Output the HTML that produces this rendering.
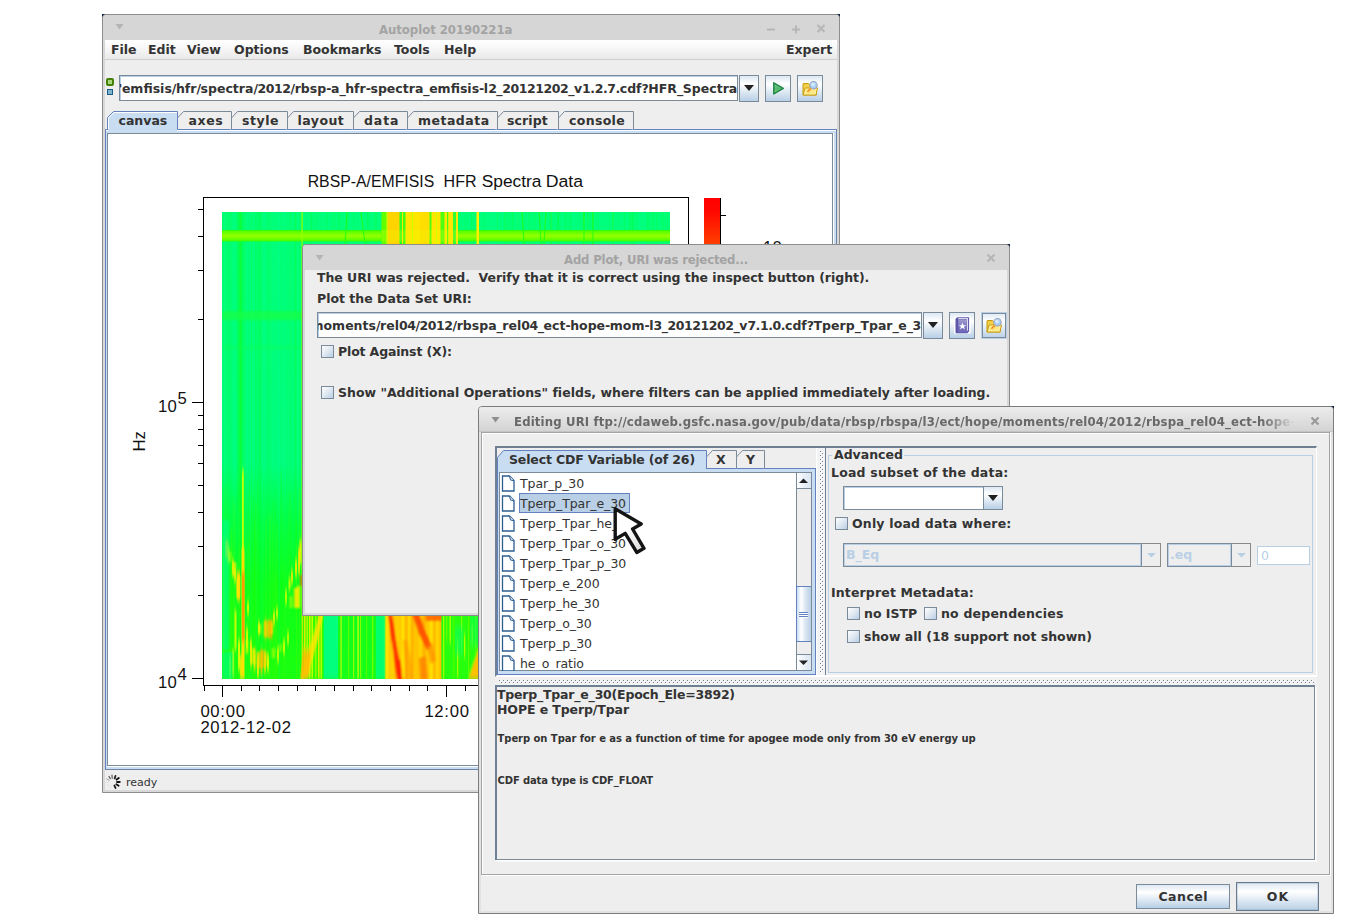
<!DOCTYPE html>
<html><head><meta charset="utf-8"><title>Autoplot</title>
<style>
html,body{margin:0;padding:0;background:#fff;}
body{width:1345px;height:916px;position:relative;overflow:hidden;font:bold 12.5px "DejaVu Sans","Liberation Sans",sans-serif;color:#333;}
.a{position:absolute;box-sizing:border-box;}
.t{position:absolute;white-space:pre;line-height:16px;height:16px;}
.win{position:absolute;box-sizing:border-box;background:#eee;border:1px solid #8e8e8e;border-radius:5px 5px 0 0;overflow:hidden;}
.tb{position:absolute;left:0;right:0;top:0;background:#d6d6d6;}
.tbt{position:absolute;font:bold 13px "DejaVu Sans Condensed","Liberation Sans",sans-serif;color:#a3a3a3;white-space:pre;}
.btn{position:absolute;box-sizing:border-box;border:1px solid #7a8a99;background:linear-gradient(#dde8f3 0%,#fff 32%,#b8cfe5 100%);}
.tf{position:absolute;box-sizing:border-box;border:1px solid #7a8a99;background:#fff;overflow:hidden;}
.tf:before{content:"";position:absolute;left:0;top:0;right:0;bottom:0;border:1px solid #b8cfe5;border-right:0;border-bottom:0;}
.cb{position:absolute;box-sizing:border-box;width:13px;height:13px;border:1px solid #7a8a99;background:linear-gradient(135deg,#fff 0%,#dfe8f1 50%,#b8cfe5 100%);}
.tab{position:absolute;box-sizing:border-box;height:19px;line-height:17px;text-align:center;}
.nf{font-weight:normal;}
</style></head><body>
<!-- ================= WINDOW 1 : Autoplot main ================= -->
<div class="a" style="left:102px;top:14px;width:4px;height:4px;background:#0b1d3a;"></div><div class="a" style="left:836px;top:14px;width:4px;height:4px;background:#0b1d3a;"></div>
<div class="a" style="left:102px;top:14px;width:738px;height:779px;background:#eee;border:1px solid #8d8d8d;border-radius:4px 4px 0 0;box-shadow:inset 0 0 0 2px #d8d8d8;"></div>
<div class="a" style="left:103px;top:15px;width:736px;height:25px;background:#d6d6d6;border-radius:3px 3px 0 0;"></div>
<!-- titlebar glyphs -->
<svg class="a" style="left:115px;top:23px" width="10" height="8"><path d="M0.5 1 L8.5 1 L4.5 6.5 Z" fill="#b4b4b4"/></svg>
<div class="tbt" style="left:379px;top:21px;line-height:17px;letter-spacing:-0.040px;">Autoplot 20190221a</div>
<svg class="a" style="left:764px;top:20px" width="70" height="16"><g stroke="#b6b6b6" stroke-width="2" fill="none"><path d="M3 9.5 H11"/><path d="M28 9.5 H36 M32 5.5 V13.5"/><path d="M53.500 5 L60.500 12 M60.500 5 L53.500 12" stroke-width="2.200"/></g></svg>
<!-- menubar -->
<div class="a" style="left:105px;top:40px;width:732px;height:20px;background:linear-gradient(#fff 0%,#fafafa 30%,#e9e9e9 100%);border-bottom:1px solid #cfcfcf;"></div>
<div class="t" style="left:111px;top:42px;">File</div>
<div class="t" style="left:148px;top:42px;">Edit</div>
<div class="t" style="left:187px;top:42px;">View</div>
<div class="t" style="left:234px;top:42px;">Options</div>
<div class="t" style="left:303px;top:42px;">Bookmarks</div>
<div class="t" style="left:394px;top:42px;">Tools</div>
<div class="t" style="left:444px;top:42px;">Help</div>
<div class="t" style="left:786px;top:42px;">Expert</div>
<!-- status squares -->
<div class="a" style="left:106px;top:78px;width:8px;height:8px;background:#a6d87a;border:2px solid #447f06;border-radius:2px;"></div>
<div class="a" style="left:107px;top:89px;width:6px;height:6px;background:#7fb5d3;border:1px solid #1d5c80;"></div>
<!-- url field -->
<div class="tf" style="left:119px;top:75px;width:619px;height:26px;"><div class="t" style="left:-1.500px;top:5px;"><span style="letter-spacing:-0.450px">'</span>emfisis<span style="letter-spacing:-0.450px">/</span>hfr<span style="letter-spacing:-0.450px">/</span>spectra<span style="letter-spacing:-0.450px">/2012/</span>rbsp<span style="letter-spacing:-0.450px">-</span>a<span style="letter-spacing:-0.450px">_</span>hfr<span style="letter-spacing:-0.450px">-</span>spectra<span style="letter-spacing:-0.450px">_</span>emfisis<span style="letter-spacing:-0.450px">-</span>l<span style="letter-spacing:-0.450px">2_20121202_</span>v<span style="letter-spacing:-0.450px">1.2.7.</span>cdf<span style="letter-spacing:-0.450px">?</span>HFR<span style="letter-spacing:-0.450px">_</span>Spectra</div></div>
<div class="btn" style="left:739px;top:75px;width:20px;height:27px;"><svg class="a" style="left:4px;top:9px" width="11" height="7"><path d="M0 0 H10 L5 6 Z" fill="#222"/></svg></div>
<div class="btn" style="left:765px;top:75px;width:26px;height:27px;"><svg class="a" style="left:6px;top:5px" width="14" height="15"><defs><linearGradient id="pg" x1="0" y1="0" x2="0" y2="1"><stop offset="0" stop-color="#7ccf96"/><stop offset="0.550" stop-color="#4fb56c"/><stop offset="1" stop-color="#8fd66a"/></linearGradient></defs><path d="M1.800 1.800 L11.300 7.400 L1.800 12.900 Z" fill="url(#pg)" stroke="#23884a" stroke-width="1.500" stroke-linejoin="round"/></svg></div>
<div class="btn" style="left:797px;top:75px;width:26px;height:27px;"><svg class="a" style="left:4px;top:4px" width="18" height="18"><path d="M1 4 Q1 3.500 1.500 3.500 H6.500 L8 5 H14.500 V15 H1 Z" fill="#f3cf4a" stroke="#c49a0c"/><path d="M3 8 H15.500 L14 15 H1.200 Z" fill="#fff0a0" stroke="#c9a010"/><path d="M4 9.500 H13.500 L12.800 13.500 H3 Z" fill="#ffe678" opacity=".7"/><circle cx="11.500" cy="5.200" r="3.700" fill="#a9d1f7" stroke="#9da5b8" stroke-width="1.100"/><circle cx="11" cy="4.500" r="1.800" fill="#d6eafc"/><path d="M8.800 8.300 L5.600 11.800" stroke="#e8742a" stroke-width="2"/><path d="M8.800 8.300 L5.600 11.800" stroke="#ffd23c" stroke-width="2" stroke-dasharray="0.800 1"/></svg></div>
<!-- tabs -->
<div class="a" style="left:105px;top:129px;width:732px;height:641px;background:#c8ddf2;border:1px solid #6382bf;border-right-color:#6d83a6;border-bottom-color:#6d83a6;box-shadow:inset 0 1px 0 #fff;"></div>
<div class="a" style="left:107px;top:133px;width:727px;height:634px;background:#fff;"></div>
<div class="a" style="left:107px;top:133px;width:726px;height:633px;background:#fff;border:1px solid #7a8a99;"></div>
<svg class="a" style="left:105px;top:110px" width="540" height="22">
 <g font-family="DejaVu Sans, Liberation Sans, sans-serif" font-weight="bold" font-size="12.500" fill="#333">
  <path d="M2.500 21 V7.500 L8.500 1.500 H72.500 V19.500" fill="#c8ddf2" stroke="#6382bf"/>
  <path d="M3.500 20 V8 L9 2.500 H72" fill="none" stroke="#fff"/>
  <rect x="3" y="19" width="69" height="3" fill="#c8ddf2"/>
  <rect x="1" y="20" width="2" height="1" fill="#fff"/>
  <g fill="#eee" stroke="#7a8a99">
   <path d="M72.500 8 L78.500 1.500 H126.500 V19.500"/>
   <path d="M126.500 8 L132.500 1.500 H182.500 V19.500"/>
   <path d="M182.500 8 L188.500 1.500 H248.500 V19.500"/>
   <path d="M248.500 8 L254.500 1.500 H302.500 V19.500"/>
   <path d="M302.500 8 L308.500 1.500 H392.500 V19.500"/>
   <path d="M392.500 8 L398.500 1.500 H453.500 V19.500"/>
   <path d="M453.500 8 L459.500 1.500 H528.500 V19.500"/>
  </g>
  <text x="13.500" y="15">canvas</text>
  <text x="83.500" y="15" letter-spacing="0.600">axes</text>
  <text x="137" y="15" letter-spacing="0.550">style</text>
  <text x="192.500" y="15" letter-spacing="0.480">layout</text>
  <text x="259" y="15" letter-spacing="0.900">data</text>
  <text x="313" y="15" letter-spacing="0.480">metadata</text>
  <text x="402" y="15" letter-spacing="0.100">script</text>
  <text x="464" y="15" letter-spacing="0.330">console</text>
 </g>
</svg>
<!-- status bar -->
<svg class="a" style="left:105px;top:774px" width="17" height="16"><g stroke-linecap="round" stroke-width="1.800" fill="none">
<path d="M10.500 1.800 L9.700 4.400" stroke="#222"/><path d="M13.800 4 L11.600 5.600" stroke="#111"/><path d="M14.800 8 L12 8" stroke="#111"/><path d="M13.600 11.800 L11.300 10.300" stroke="#111"/><path d="M10.500 14 L9.400 11.500" stroke="#111"/>
<path d="M7 1.500 L7.300 4" stroke="#888"/><path d="M4 2.500 L5.300 4.600" stroke="#555" stroke-width="1.200"/><path d="M1.800 5 L4 6.200" stroke="#999" stroke-width="1"/><path d="M1.200 8.500 L3.300 8.300" stroke="#ddd" stroke-width="1"/><path d="M2.500 11.500 L4 10.300" stroke="#e0e0e0" stroke-width="1"/><path d="M5 13.500 L5.800 12" stroke="#e0e0e0" stroke-width="1"/></g></svg>
<div class="t nf" style="left:126px;top:775px;font-size:11px;">ready</div>
<!-- ============ plot canvas ============ -->
<svg class="a" style="left:108px;top:134px" width="724" height="631" viewBox="108 134 724 631">
<defs><filter id="b1" x="-20%" y="-20%" width="140%" height="140%"><feGaussianBlur stdDeviation="1.2"/></filter><filter id="b2" x="-20%" y="-20%" width="140%" height="140%"><feGaussianBlur stdDeviation="2.5"/></filter><filter id="bx" x="-5%" y="-5%" width="110%" height="110%"><feGaussianBlur stdDeviation="0.5 3"/></filter><linearGradient id="gv" x1="0" y1="0" x2="0" y2="1"><stop offset="0" stop-color="#00ff7c"/><stop offset="0.54" stop-color="#00fd80"/><stop offset="0.66" stop-color="#04ff48"/><stop offset="0.8" stop-color="#0cff1c"/><stop offset="1" stop-color="#1cff10"/></linearGradient><linearGradient id="band" x1="0" y1="0" x2="0" y2="1"><stop offset="0" stop-color="#2aff10"/><stop offset="0.12" stop-color="#58ff00"/><stop offset="0.5" stop-color="#96ff00"/><stop offset="0.88" stop-color="#58ff00"/><stop offset="1" stop-color="#2aff10"/></linearGradient><linearGradient id="cbar" x1="0" y1="0" x2="0" y2="1"><stop offset="0" stop-color="#ff0000"/><stop offset="0.025" stop-color="#ff0600"/><stop offset="0.1" stop-color="#ff4200"/><stop offset="0.2" stop-color="#ff8000"/><stop offset="0.35" stop-color="#ffd800"/><stop offset="0.5" stop-color="#40ff00"/><stop offset="0.65" stop-color="#00ffc0"/><stop offset="0.8" stop-color="#0060ff"/><stop offset="1" stop-color="#000030"/></linearGradient><clipPath id="sc"><rect x="222" y="212" width="448" height="467"/></clipPath></defs>
<g clip-path="url(#sc)">
<rect x="222" y="212" width="448" height="467" fill="url(#gv)"/>
<rect x="367.1" y="212" width="1" height="467" fill="#00ff20" opacity="0.14"/>
<rect x="254.5" y="212" width="1.5" height="467" fill="#30ff10" opacity="0.08"/>
<rect x="248.0" y="212" width="1.5" height="467" fill="#00ff20" opacity="0.10"/>
<rect x="416.3" y="212" width="0.8" height="467" fill="#30ff10" opacity="0.11"/>
<rect x="412.2" y="212" width="1.5" height="467" fill="#10ff30" opacity="0.08"/>
<rect x="504.5" y="212" width="1.5" height="467" fill="#30ff10" opacity="0.25"/>
<rect x="484.3" y="212" width="0.8" height="467" fill="#00ff20" opacity="0.26"/>
<rect x="471.4" y="212" width="1" height="467" fill="#10ff30" opacity="0.12"/>
<rect x="464.2" y="212" width="1.5" height="467" fill="#10ff30" opacity="0.12"/>
<rect x="268.2" y="212" width="1.5" height="467" fill="#00ff30" opacity="0.19"/>
<rect x="265.6" y="212" width="2" height="467" fill="#00ff20" opacity="0.07"/>
<rect x="499.3" y="212" width="1" height="467" fill="#00ffa0" opacity="0.20"/>
<rect x="570.2" y="212" width="1" height="467" fill="#00ffa0" opacity="0.18"/>
<rect x="384.0" y="212" width="1" height="467" fill="#10ff30" opacity="0.22"/>
<rect x="258.7" y="212" width="1" height="467" fill="#00ff30" opacity="0.17"/>
<rect x="548.8" y="212" width="1" height="467" fill="#00ff20" opacity="0.18"/>
<rect x="274.9" y="212" width="1" height="467" fill="#00ff30" opacity="0.09"/>
<rect x="290.1" y="212" width="1" height="467" fill="#00ff20" opacity="0.14"/>
<rect x="564.5" y="212" width="1.5" height="467" fill="#00ff30" opacity="0.22"/>
<rect x="374.4" y="212" width="1" height="467" fill="#30ff10" opacity="0.18"/>
<rect x="579.0" y="212" width="0.8" height="467" fill="#00ff30" opacity="0.23"/>
<rect x="434.4" y="212" width="2" height="467" fill="#00ff30" opacity="0.07"/>
<rect x="511.9" y="212" width="2" height="467" fill="#00ff30" opacity="0.22"/>
<rect x="543.0" y="212" width="2" height="467" fill="#00ffa0" opacity="0.13"/>
<rect x="381.2" y="212" width="1.5" height="467" fill="#00ff20" opacity="0.08"/>
<rect x="319.8" y="212" width="1" height="467" fill="#10ff30" opacity="0.09"/>
<rect x="400.3" y="212" width="1" height="467" fill="#00ffa0" opacity="0.08"/>
<rect x="401.9" y="212" width="1" height="467" fill="#00ffa0" opacity="0.24"/>
<rect x="609.1" y="212" width="1" height="467" fill="#00ff30" opacity="0.20"/>
<rect x="527.9" y="212" width="1" height="467" fill="#10ff30" opacity="0.25"/>
<rect x="259.2" y="212" width="1" height="467" fill="#10ff30" opacity="0.11"/>
<rect x="227.4" y="212" width="1.5" height="467" fill="#00ff30" opacity="0.10"/>
<rect x="223.8" y="212" width="1" height="467" fill="#30ff10" opacity="0.17"/>
<rect x="475.7" y="212" width="1" height="467" fill="#30ff10" opacity="0.20"/>
<rect x="647.7" y="212" width="2" height="467" fill="#00ff20" opacity="0.20"/>
<rect x="426.6" y="212" width="2" height="467" fill="#00ffa0" opacity="0.22"/>
<rect x="400.3" y="212" width="1" height="467" fill="#00ffa0" opacity="0.08"/>
<rect x="249.9" y="212" width="0.8" height="467" fill="#00ffa0" opacity="0.26"/>
<rect x="294.7" y="212" width="1" height="467" fill="#00ff20" opacity="0.18"/>
<rect x="222.1" y="212" width="1" height="467" fill="#00ff30" opacity="0.17"/>
<rect x="497.0" y="212" width="0.8" height="467" fill="#30ff10" opacity="0.23"/>
<rect x="390.6" y="212" width="2" height="467" fill="#00ff30" opacity="0.11"/>
<rect x="491.8" y="212" width="1" height="467" fill="#00ffa0" opacity="0.08"/>
<rect x="666.9" y="212" width="1" height="467" fill="#00ff30" opacity="0.16"/>
<rect x="260.5" y="212" width="0.8" height="467" fill="#00ff30" opacity="0.21"/>
<rect x="436.4" y="212" width="2" height="467" fill="#00ff20" opacity="0.09"/>
<rect x="313.9" y="212" width="1.5" height="467" fill="#30ff10" opacity="0.13"/>
<rect x="631.5" y="212" width="1.5" height="467" fill="#00ff20" opacity="0.12"/>
<rect x="533.9" y="212" width="1" height="467" fill="#10ff30" opacity="0.16"/>
<rect x="381.4" y="212" width="1" height="467" fill="#30ff10" opacity="0.17"/>
<rect x="369.7" y="212" width="1" height="467" fill="#10ff30" opacity="0.18"/>
<rect x="583.1" y="212" width="1" height="467" fill="#10ff30" opacity="0.21"/>
<rect x="311.6" y="212" width="1" height="467" fill="#00ff20" opacity="0.13"/>
<rect x="665.3" y="212" width="1" height="467" fill="#10ff30" opacity="0.15"/>
<rect x="532.2" y="212" width="1" height="467" fill="#00ff30" opacity="0.15"/>
<rect x="649.8" y="212" width="1" height="467" fill="#00ff20" opacity="0.08"/>
<rect x="323.6" y="212" width="1" height="467" fill="#00ffa0" opacity="0.13"/>
<rect x="501.6" y="212" width="1.5" height="467" fill="#00ffa0" opacity="0.23"/>
<rect x="629.3" y="212" width="1" height="467" fill="#00ff20" opacity="0.22"/>
<rect x="595.9" y="212" width="0.8" height="467" fill="#10ff30" opacity="0.24"/>
<rect x="436.2" y="212" width="1" height="467" fill="#00ff30" opacity="0.15"/>
<rect x="260.9" y="212" width="2" height="467" fill="#00ffa0" opacity="0.14"/>
<rect x="555.0" y="212" width="0.8" height="467" fill="#10ff30" opacity="0.20"/>
<rect x="666.9" y="212" width="0.8" height="467" fill="#00ffa0" opacity="0.09"/>
<rect x="583.3" y="212" width="1" height="467" fill="#30ff10" opacity="0.18"/>
<rect x="661.2" y="212" width="2" height="467" fill="#10ff30" opacity="0.25"/>
<rect x="467.8" y="212" width="1" height="467" fill="#00ff20" opacity="0.06"/>
<rect x="457.9" y="212" width="1" height="467" fill="#10ff30" opacity="0.15"/>
<rect x="592.1" y="212" width="1" height="467" fill="#10ff30" opacity="0.07"/>
<rect x="353.2" y="212" width="1" height="467" fill="#00ff30" opacity="0.21"/>
<rect x="338.2" y="212" width="1" height="467" fill="#00ff20" opacity="0.23"/>
<rect x="629.7" y="212" width="1" height="467" fill="#30ff10" opacity="0.24"/>
<rect x="587.1" y="212" width="1.5" height="467" fill="#30ff10" opacity="0.14"/>
<rect x="280.6" y="212" width="1" height="467" fill="#00ff20" opacity="0.16"/>
<rect x="613.0" y="212" width="1" height="467" fill="#10ff30" opacity="0.18"/>
<rect x="299.2" y="212" width="1" height="467" fill="#00ff20" opacity="0.18"/>
<rect x="471.3" y="212" width="1" height="467" fill="#30ff10" opacity="0.20"/>
<rect x="470.8" y="212" width="0.8" height="467" fill="#00ff20" opacity="0.24"/>
<rect x="333.3" y="212" width="1" height="467" fill="#00ff20" opacity="0.07"/>
<rect x="449.5" y="212" width="1.5" height="467" fill="#00ff20" opacity="0.07"/>
<rect x="420.6" y="212" width="1.5" height="467" fill="#30ff10" opacity="0.25"/>
<rect x="451.4" y="212" width="2" height="467" fill="#30ff10" opacity="0.12"/>
<rect x="460.9" y="212" width="1" height="467" fill="#10ff30" opacity="0.16"/>
<rect x="535.2" y="212" width="1" height="467" fill="#10ff30" opacity="0.24"/>
<rect x="598.3" y="212" width="1" height="467" fill="#00ffa0" opacity="0.14"/>
<rect x="420.1" y="212" width="0.8" height="467" fill="#00ffa0" opacity="0.19"/>
<rect x="254.8" y="212" width="2" height="467" fill="#00ff20" opacity="0.12"/>
<rect x="623.9" y="212" width="1" height="467" fill="#00ff30" opacity="0.25"/>
<rect x="286.1" y="212" width="1" height="467" fill="#10ff30" opacity="0.25"/>
<rect x="556.5" y="212" width="0.8" height="467" fill="#00ffa0" opacity="0.14"/>
<rect x="294.9" y="212" width="2" height="467" fill="#10ff30" opacity="0.23"/>
<rect x="538.4" y="212" width="1.5" height="467" fill="#00ffa0" opacity="0.14"/>
<rect x="309.7" y="212" width="1" height="467" fill="#00ff30" opacity="0.08"/>
<rect x="230.7" y="212" width="1.5" height="467" fill="#00ff20" opacity="0.15"/>
<rect x="394.2" y="212" width="1.5" height="467" fill="#30ff10" opacity="0.18"/>
<rect x="652.4" y="212" width="0.8" height="467" fill="#10ff30" opacity="0.26"/>
<rect x="657.3" y="212" width="0.8" height="467" fill="#00ff30" opacity="0.08"/>
<rect x="239.7" y="212" width="1" height="467" fill="#10ff30" opacity="0.11"/>
<rect x="589.3" y="212" width="2" height="467" fill="#00ff30" opacity="0.22"/>
<rect x="403.9" y="212" width="1.5" height="467" fill="#30ff10" opacity="0.24"/>
<rect x="443.6" y="212" width="1" height="467" fill="#00ff20" opacity="0.08"/>
<rect x="580.2" y="212" width="1" height="467" fill="#00ff20" opacity="0.15"/>
<rect x="342.5" y="212" width="0.8" height="467" fill="#00ff30" opacity="0.19"/>
<rect x="259.5" y="212" width="1" height="467" fill="#00ff20" opacity="0.07"/>
<rect x="425.3" y="212" width="1" height="467" fill="#00ffa0" opacity="0.26"/>
<rect x="637.1" y="212" width="1" height="467" fill="#00ff20" opacity="0.18"/>
<rect x="458.1" y="212" width="1" height="467" fill="#10ff30" opacity="0.25"/>
<rect x="339.3" y="212" width="1" height="467" fill="#00ff30" opacity="0.10"/>
<rect x="503.6" y="212" width="1.5" height="467" fill="#00ff30" opacity="0.21"/>
<rect x="421.7" y="212" width="2" height="467" fill="#00ff30" opacity="0.10"/>
<rect x="582.0" y="212" width="1" height="467" fill="#00ff20" opacity="0.07"/>
<rect x="550.4" y="212" width="1.5" height="467" fill="#30ff10" opacity="0.26"/>
<rect x="434.7" y="212" width="1" height="467" fill="#00ffa0" opacity="0.08"/>
<rect x="516.1" y="212" width="1.5" height="467" fill="#00ffa0" opacity="0.23"/>
<rect x="656.7" y="212" width="1" height="467" fill="#10ff30" opacity="0.20"/>
<rect x="375.5" y="212" width="2" height="467" fill="#10ff30" opacity="0.21"/>
<rect x="403.3" y="212" width="1" height="467" fill="#10ff30" opacity="0.26"/>
<rect x="228.4" y="212" width="2" height="467" fill="#00ff30" opacity="0.21"/>
<rect x="415.0" y="212" width="0.8" height="467" fill="#00ffa0" opacity="0.08"/>
<rect x="612.0" y="212" width="2" height="467" fill="#30ff10" opacity="0.25"/>
<rect x="330.5" y="212" width="1" height="467" fill="#10ff30" opacity="0.07"/>
<rect x="292.6" y="212" width="1" height="467" fill="#00ff30" opacity="0.06"/>
<rect x="652.9" y="212" width="1.5" height="467" fill="#00ff20" opacity="0.12"/>
<rect x="654.6" y="212" width="1" height="467" fill="#10ff30" opacity="0.10"/>
<rect x="222.5" y="212" width="1" height="467" fill="#00ff30" opacity="0.08"/>
<rect x="447.2" y="212" width="1" height="467" fill="#00ff20" opacity="0.11"/>
<rect x="262.7" y="212" width="0.8" height="467" fill="#30ff10" opacity="0.09"/>
<rect x="240.7" y="212" width="0.8" height="467" fill="#10ff30" opacity="0.12"/>
<rect x="259.8" y="212" width="1.5" height="467" fill="#10ff30" opacity="0.23"/>
<rect x="516.6" y="212" width="2" height="467" fill="#30ff10" opacity="0.22"/>
<rect x="396.5" y="212" width="1" height="467" fill="#00ffa0" opacity="0.20"/>
<rect x="289.0" y="212" width="2" height="467" fill="#10ff30" opacity="0.18"/>
<rect x="241.6" y="212" width="2" height="467" fill="#00ffa0" opacity="0.24"/>
<rect x="550.8" y="212" width="1.5" height="467" fill="#30ff10" opacity="0.09"/>
<rect x="559.3" y="212" width="1.5" height="467" fill="#00ff20" opacity="0.23"/>
<rect x="592.2" y="212" width="1.5" height="467" fill="#10ff30" opacity="0.22"/>
<rect x="260.1" y="212" width="0.8" height="467" fill="#00ff30" opacity="0.09"/>
<rect x="651.9" y="212" width="1" height="467" fill="#30ff10" opacity="0.23"/>
<rect x="244.7" y="212" width="0.8" height="467" fill="#10ff30" opacity="0.19"/>
<rect x="441.2" y="212" width="0.8" height="467" fill="#00ff20" opacity="0.15"/>
<rect x="557.2" y="212" width="1.5" height="467" fill="#00ff20" opacity="0.24"/>
<rect x="517.4" y="212" width="0.8" height="467" fill="#00ffa0" opacity="0.21"/>
<rect x="335.0" y="212" width="0.8" height="467" fill="#10ff30" opacity="0.23"/>
<rect x="548.7" y="212" width="1" height="467" fill="#00ffa0" opacity="0.11"/>
<rect x="443.3" y="212" width="1" height="467" fill="#00ff30" opacity="0.08"/>
<rect x="565.6" y="212" width="1.5" height="467" fill="#10ff30" opacity="0.19"/>
<rect x="256.7" y="212" width="1" height="467" fill="#00ff30" opacity="0.13"/>
<rect x="500.3" y="212" width="1" height="467" fill="#00ff20" opacity="0.06"/>
<rect x="439.6" y="212" width="2" height="467" fill="#10ff30" opacity="0.08"/>
<rect x="524.7" y="212" width="1" height="467" fill="#00ff30" opacity="0.20"/>
<rect x="430.2" y="212" width="1" height="467" fill="#30ff10" opacity="0.21"/>
<rect x="311.3" y="212" width="0.8" height="467" fill="#00ff20" opacity="0.25"/>
<rect x="351.7" y="212" width="0.8" height="467" fill="#00ffa0" opacity="0.22"/>
<rect x="667.3" y="212" width="1" height="467" fill="#10ff30" opacity="0.10"/>
<rect x="255.4" y="212" width="0.8" height="467" fill="#30ff10" opacity="0.09"/>
<rect x="339.3" y="212" width="1" height="467" fill="#30ff10" opacity="0.09"/>
<rect x="347.2" y="212" width="0.8" height="467" fill="#10ff30" opacity="0.20"/>
<rect x="445.1" y="212" width="1" height="467" fill="#10ff30" opacity="0.14"/>
<rect x="223.6" y="212" width="1" height="467" fill="#00ffa0" opacity="0.20"/>
<rect x="357.3" y="212" width="1" height="467" fill="#00ffa0" opacity="0.14"/>
<rect x="363.6" y="212" width="1" height="467" fill="#00ff30" opacity="0.06"/>
<rect x="597.9" y="212" width="0.8" height="467" fill="#10ff30" opacity="0.25"/>
<rect x="541.4" y="212" width="2" height="467" fill="#00ff30" opacity="0.12"/>
<rect x="251.1" y="212" width="1" height="467" fill="#30ff10" opacity="0.26"/>
<rect x="256.2" y="212" width="1" height="467" fill="#00ff20" opacity="0.21"/>
<rect x="347.7" y="212" width="0.8" height="467" fill="#00ff30" opacity="0.23"/>
<rect x="506.5" y="212" width="1" height="467" fill="#00ff30" opacity="0.11"/>
<rect x="417.4" y="212" width="1" height="467" fill="#00ff30" opacity="0.10"/>
<rect x="573.7" y="212" width="1" height="467" fill="#00ffa0" opacity="0.24"/>
<rect x="631.2" y="212" width="1.5" height="467" fill="#00ff20" opacity="0.17"/>
<rect x="244.2" y="212" width="2" height="467" fill="#30ff10" opacity="0.14"/>
<rect x="559.2" y="212" width="2" height="467" fill="#00ffa0" opacity="0.23"/>
<rect x="243.9" y="212" width="1.5" height="467" fill="#00ffa0" opacity="0.09"/>
<rect x="407.9" y="212" width="1" height="467" fill="#00ff30" opacity="0.12"/>
<rect x="404.0" y="212" width="1" height="467" fill="#30ff10" opacity="0.12"/>
<rect x="521.7" y="212" width="0.8" height="467" fill="#10ff30" opacity="0.09"/>
<rect x="255.7" y="212" width="1.5" height="467" fill="#00ffa0" opacity="0.24"/>
<rect x="468.6" y="212" width="1" height="467" fill="#00ffa0" opacity="0.24"/>
<rect x="413.5" y="212" width="1.5" height="467" fill="#00ff20" opacity="0.10"/>
<rect x="300.3" y="212" width="1.5" height="467" fill="#10ff30" opacity="0.08"/>
<rect x="387.0" y="212" width="1.5" height="467" fill="#00ff20" opacity="0.10"/>
<rect x="557.8" y="212" width="1" height="467" fill="#30ff10" opacity="0.14"/>
<rect x="316.1" y="212" width="1" height="467" fill="#00ff20" opacity="0.13"/>
<rect x="445.2" y="212" width="1.5" height="467" fill="#10ff30" opacity="0.25"/>
<rect x="529.7" y="212" width="1.5" height="467" fill="#10ff30" opacity="0.19"/>
<rect x="263.5" y="212" width="1" height="467" fill="#00ffa0" opacity="0.14"/>
<rect x="415.5" y="212" width="1" height="467" fill="#00ff20" opacity="0.23"/>
<rect x="279.0" y="212" width="1" height="467" fill="#00ffa0" opacity="0.20"/>
<rect x="655.8" y="212" width="1" height="467" fill="#00ffa0" opacity="0.06"/>
<rect x="638.7" y="212" width="1.5" height="467" fill="#00ffa0" opacity="0.23"/>
<rect x="333.3" y="212" width="0.8" height="467" fill="#10ff30" opacity="0.10"/>
<rect x="456.0" y="212" width="2" height="467" fill="#00ffa0" opacity="0.08"/>
<rect x="260.1" y="212" width="0.8" height="467" fill="#10ff30" opacity="0.06"/>
<rect x="326.2" y="212" width="0.8" height="467" fill="#00ff30" opacity="0.19"/>
<rect x="653.2" y="212" width="2" height="467" fill="#00ffa0" opacity="0.11"/>
<rect x="535.0" y="212" width="0.8" height="467" fill="#00ff30" opacity="0.08"/>
<rect x="456.9" y="212" width="1.5" height="467" fill="#00ff30" opacity="0.10"/>
<rect x="322.2" y="212" width="1.5" height="467" fill="#30ff10" opacity="0.06"/>
<rect x="357.1" y="212" width="1" height="467" fill="#00ff30" opacity="0.12"/>
<rect x="510.8" y="212" width="1" height="467" fill="#10ff30" opacity="0.16"/>
<rect x="467.1" y="212" width="0.8" height="467" fill="#00ff30" opacity="0.25"/>
<rect x="246.8" y="212" width="1" height="467" fill="#00ffa0" opacity="0.16"/>
<rect x="258.3" y="212" width="1" height="467" fill="#00ff30" opacity="0.19"/>
<rect x="323.6" y="212" width="0.8" height="467" fill="#00ffa0" opacity="0.20"/>
<rect x="384.3" y="212" width="1" height="467" fill="#00ff30" opacity="0.10"/>
<rect x="553.1" y="212" width="1.5" height="467" fill="#00ffa0" opacity="0.07"/>
<rect x="656.5" y="212" width="1" height="467" fill="#10ff30" opacity="0.21"/>
<rect x="325.4" y="212" width="1" height="467" fill="#00ff30" opacity="0.11"/>
<rect x="270.8" y="212" width="1.5" height="467" fill="#10ff30" opacity="0.16"/>
<rect x="623.6" y="212" width="1" height="467" fill="#00ff20" opacity="0.14"/>
<rect x="647.0" y="212" width="1" height="467" fill="#00ff20" opacity="0.24"/>
<rect x="317.4" y="212" width="1.5" height="467" fill="#00ff20" opacity="0.09"/>
<rect x="540.0" y="212" width="1" height="467" fill="#00ff30" opacity="0.14"/>
<rect x="550.3" y="212" width="0.8" height="467" fill="#00ff30" opacity="0.25"/>
<rect x="307.4" y="212" width="2" height="467" fill="#00ffa0" opacity="0.25"/>
<rect x="236.3" y="212" width="2" height="467" fill="#00ff30" opacity="0.21"/>
<rect x="663.3" y="212" width="1" height="467" fill="#00ff20" opacity="0.09"/>
<rect x="257.1" y="212" width="0.8" height="467" fill="#00ff20" opacity="0.13"/>
<rect x="473.4" y="212" width="1" height="467" fill="#00ff30" opacity="0.14"/>
<rect x="590.3" y="212" width="1" height="467" fill="#00ffa0" opacity="0.08"/>
<rect x="309.7" y="212" width="1.5" height="467" fill="#10ff30" opacity="0.24"/>
<rect x="366.8" y="212" width="2" height="467" fill="#00ff20" opacity="0.24"/>
<rect x="505.0" y="212" width="1" height="467" fill="#00ffa0" opacity="0.22"/>
<rect x="240.2" y="212" width="0.8" height="467" fill="#00ff20" opacity="0.15"/>
<rect x="337.1" y="212" width="2" height="467" fill="#30ff10" opacity="0.07"/>
<rect x="373.9" y="212" width="1" height="467" fill="#30ff10" opacity="0.13"/>
<rect x="241.5" y="212" width="2" height="467" fill="#00ff30" opacity="0.20"/>
<rect x="636.1" y="212" width="1" height="467" fill="#30ff10" opacity="0.06"/>
<rect x="632.6" y="212" width="2" height="467" fill="#00ff20" opacity="0.25"/>
<rect x="232.9" y="212" width="1" height="467" fill="#00ffa0" opacity="0.08"/>
<rect x="649.4" y="212" width="1" height="467" fill="#00ffa0" opacity="0.22"/>
<rect x="587.0" y="212" width="1" height="467" fill="#10ff30" opacity="0.25"/>
<rect x="225.9" y="212" width="2" height="467" fill="#10ff30" opacity="0.12"/>
<rect x="494.0" y="212" width="1" height="467" fill="#00ffa0" opacity="0.23"/>
<rect x="384.1" y="212" width="1.5" height="467" fill="#10ff30" opacity="0.08"/>
<rect x="397.5" y="212" width="1" height="467" fill="#00ff20" opacity="0.11"/>
<rect x="513.0" y="212" width="1" height="467" fill="#00ff30" opacity="0.17"/>
<rect x="294.0" y="212" width="1" height="467" fill="#00ff20" opacity="0.24"/>
<rect x="340.7" y="212" width="0.8" height="467" fill="#00ffa0" opacity="0.10"/>
<rect x="445.3" y="212" width="2" height="467" fill="#10ff30" opacity="0.25"/>
<rect x="326.9" y="212" width="1" height="467" fill="#10ff30" opacity="0.15"/>
<rect x="557.1" y="212" width="2" height="467" fill="#00ff30" opacity="0.21"/>
<rect x="353.6" y="212" width="1.5" height="467" fill="#00ff30" opacity="0.11"/>
<rect x="552.7" y="212" width="1" height="467" fill="#10ff30" opacity="0.15"/>
<rect x="331.9" y="212" width="1" height="467" fill="#30ff10" opacity="0.12"/>
<rect x="306.3" y="212" width="0.8" height="467" fill="#10ff30" opacity="0.14"/>
<rect x="449.3" y="212" width="1" height="467" fill="#00ff20" opacity="0.19"/>
<rect x="514.7" y="212" width="0.8" height="467" fill="#00ffa0" opacity="0.08"/>
<rect x="617.5" y="212" width="1" height="467" fill="#00ff30" opacity="0.23"/>
<rect x="240.1" y="212" width="1" height="467" fill="#00ff20" opacity="0.11"/>
<rect x="306.9" y="212" width="1.5" height="467" fill="#00ff20" opacity="0.10"/>
<rect x="388.8" y="212" width="1" height="467" fill="#00ff30" opacity="0.15"/>
<rect x="569.2" y="212" width="2" height="467" fill="#00ff20" opacity="0.25"/>
<rect x="507.6" y="212" width="2" height="467" fill="#10ff30" opacity="0.18"/>
<rect x="238.8" y="212" width="1" height="467" fill="#10ff30" opacity="0.09"/>
<rect x="669.9" y="212" width="0.8" height="467" fill="#10ff30" opacity="0.18"/>
<rect x="587.0" y="212" width="1" height="467" fill="#00ff30" opacity="0.14"/>
<rect x="304.9" y="212" width="1" height="467" fill="#00ff20" opacity="0.08"/>
<rect x="578.3" y="212" width="1.5" height="467" fill="#00ffa0" opacity="0.16"/>
<rect x="267.4" y="212" width="1" height="467" fill="#10ff30" opacity="0.19"/>
<rect x="274.4" y="481" width="1" height="198" fill="#30ff00" opacity="0.14"/>
<rect x="255.6" y="504" width="1" height="175" fill="#50ff00" opacity="0.17"/>
<rect x="247.6" y="538" width="1" height="141" fill="#20ff00" opacity="0.18"/>
<rect x="223.5" y="562" width="1" height="117" fill="#70ff00" opacity="0.28"/>
<rect x="254.0" y="519" width="1" height="160" fill="#20ff00" opacity="0.31"/>
<rect x="295.9" y="521" width="1" height="158" fill="#20ff00" opacity="0.28"/>
<rect x="269.4" y="514" width="1" height="165" fill="#70ff00" opacity="0.27"/>
<rect x="223.2" y="536" width="1" height="143" fill="#20ff00" opacity="0.24"/>
<rect x="229.3" y="545" width="1" height="134" fill="#70ff00" opacity="0.18"/>
<rect x="234.0" y="504" width="1" height="175" fill="#50ff00" opacity="0.21"/>
<rect x="230.9" y="529" width="1" height="150" fill="#70ff00" opacity="0.28"/>
<rect x="246.7" y="570" width="1" height="109" fill="#20ff00" opacity="0.11"/>
<rect x="247.8" y="543" width="1" height="136" fill="#50ff00" opacity="0.24"/>
<rect x="296.1" y="544" width="1" height="135" fill="#70ff00" opacity="0.28"/>
<rect x="274.5" y="573" width="1" height="106" fill="#70ff00" opacity="0.24"/>
<rect x="290.0" y="492" width="1" height="187" fill="#20ff00" opacity="0.15"/>
<rect x="299.0" y="489" width="1" height="190" fill="#70ff00" opacity="0.18"/>
<rect x="242.3" y="557" width="1" height="122" fill="#50ff00" opacity="0.30"/>
<rect x="294.5" y="571" width="1" height="108" fill="#30ff00" opacity="0.25"/>
<rect x="231.7" y="542" width="1" height="137" fill="#30ff00" opacity="0.22"/>
<rect x="275.2" y="507" width="1" height="172" fill="#20ff00" opacity="0.15"/>
<rect x="276.0" y="524" width="1" height="155" fill="#50ff00" opacity="0.20"/>
<rect x="222.3" y="588" width="1" height="91" fill="#20ff00" opacity="0.20"/>
<rect x="284.6" y="564" width="1" height="115" fill="#70ff00" opacity="0.20"/>
<rect x="288.5" y="518" width="1" height="161" fill="#30ff00" opacity="0.11"/>
<rect x="257.3" y="481" width="1" height="198" fill="#50ff00" opacity="0.20"/>
<rect x="225.3" y="486" width="1" height="193" fill="#30ff00" opacity="0.30"/>
<rect x="285.8" y="531" width="1" height="148" fill="#20ff00" opacity="0.11"/>
<rect x="275.5" y="564" width="1" height="115" fill="#50ff00" opacity="0.11"/>
<rect x="303.7" y="558" width="1" height="121" fill="#70ff00" opacity="0.28"/>
<rect x="232.8" y="576" width="1" height="103" fill="#70ff00" opacity="0.16"/>
<rect x="278.3" y="557" width="1" height="122" fill="#30ff00" opacity="0.15"/>
<rect x="272.1" y="500" width="1" height="179" fill="#30ff00" opacity="0.17"/>
<rect x="296.2" y="525" width="1" height="154" fill="#20ff00" opacity="0.16"/>
<rect x="239.1" y="502" width="1" height="177" fill="#30ff00" opacity="0.21"/>
<rect x="252.5" y="494" width="1" height="185" fill="#30ff00" opacity="0.19"/>
<rect x="277.7" y="577" width="1" height="102" fill="#30ff00" opacity="0.14"/>
<rect x="231.4" y="534" width="1" height="145" fill="#30ff00" opacity="0.24"/>
<rect x="301.2" y="524" width="1" height="155" fill="#50ff00" opacity="0.21"/>
<rect x="242.7" y="534" width="1" height="145" fill="#30ff00" opacity="0.29"/>
<rect x="243.7" y="589" width="1" height="90" fill="#30ff00" opacity="0.23"/>
<rect x="249.1" y="480" width="1" height="199" fill="#50ff00" opacity="0.15"/>
<rect x="246.3" y="532" width="1" height="147" fill="#30ff00" opacity="0.17"/>
<rect x="282.1" y="560" width="1" height="119" fill="#30ff00" opacity="0.15"/>
<rect x="272.5" y="522" width="1" height="157" fill="#50ff00" opacity="0.21"/>
<rect x="232.8" y="497" width="1" height="182" fill="#50ff00" opacity="0.24"/>
<rect x="226.5" y="538" width="1" height="141" fill="#30ff00" opacity="0.17"/>
<rect x="265.8" y="520" width="1" height="159" fill="#70ff00" opacity="0.17"/>
<rect x="238.7" y="545" width="1" height="134" fill="#70ff00" opacity="0.20"/>
<rect x="223.2" y="566" width="1" height="113" fill="#20ff00" opacity="0.26"/>
<rect x="229.9" y="547" width="1" height="132" fill="#30ff00" opacity="0.29"/>
<rect x="255.0" y="502" width="1" height="177" fill="#30ff00" opacity="0.10"/>
<rect x="270.8" y="539" width="1" height="140" fill="#20ff00" opacity="0.23"/>
<rect x="242.4" y="578" width="1" height="101" fill="#50ff00" opacity="0.11"/>
<rect x="255.3" y="499" width="1" height="180" fill="#50ff00" opacity="0.11"/>
<rect x="223.0" y="536" width="1" height="143" fill="#70ff00" opacity="0.31"/>
<rect x="255.9" y="532" width="1" height="147" fill="#20ff00" opacity="0.24"/>
<rect x="288.7" y="491" width="1" height="188" fill="#30ff00" opacity="0.17"/>
<rect x="273.3" y="589" width="1" height="90" fill="#20ff00" opacity="0.26"/>
<rect x="280.7" y="471" width="1" height="208" fill="#20ff00" opacity="0.29"/>
<rect x="238.500" y="212" width="4" height="300" fill="#0cff28" opacity=".75" filter="url(#b1)"/>
<rect x="222" y="311" width="448" height="9" fill="#14ff48" opacity=".8" filter="url(#b1)"/>
<rect x="222" y="345" width="448" height="5" fill="#10ff58" opacity=".35" filter="url(#b1)"/>
<rect x="222" y="230" width="448" height="11.500" fill="url(#band)"/>
<rect x="382" y="212" width="76" height="130" fill="#ffe600"/>
<rect x="388" y="212" width="12" height="130" fill="#ffd000" opacity=".8"/>
<rect x="420" y="212" width="10" height="130" fill="#ffd800" opacity=".6"/>
<rect x="381.5" y="212" width="5" height="130" fill="#60ff00"/>
<rect x="399.5" y="212" width="2.5" height="130" fill="#30ff20"/>
<rect x="403" y="212" width="2.5" height="130" fill="#40ff10"/>
<rect x="429.5" y="212" width="2" height="130" fill="#50ff10"/>
<rect x="440.5" y="212" width="4" height="130" fill="#50ff10"/>
<rect x="447" y="212" width="1.2" height="130" fill="#40ff10"/>
<rect x="453" y="212" width="3" height="130" fill="#30ff30"/>
<rect x="386.5" y="212" width="1" height="130" fill="#a0ff00"/>
<rect x="412" y="212" width="1" height="130" fill="#c8ff00"/>
<rect x="436" y="212" width="1" height="130" fill="#d0ff00"/>
<rect x="382" y="230" width="76" height="11.500" fill="#e8ff00" opacity=".25"/>
<rect x="476.500" y="212" width="2.500" height="150" fill="#fff000"/>
<rect x="301.500" y="212" width="1.200" height="467" fill="#9cff00"/>
<rect x="302.300" y="500" width="1.200" height="179" fill="#ffd000" opacity=".8"/>
<path d="M347 212 L345 244" stroke="#20ff10" stroke-width="1.200" opacity=".8" fill="none"/>
<path d="M361 212 L365 244" stroke="#20ff10" stroke-width="1.200" opacity=".8" fill="none"/>
<path d="M522 212 L524 244" stroke="#20ff10" stroke-width="1.200" opacity=".8" fill="none"/>
<path d="M539 212 L541 244" stroke="#20ff10" stroke-width="1.200" opacity=".8" fill="none"/>
<path d="M546 212 L544 244" stroke="#20ff10" stroke-width="1.200" opacity=".8" fill="none"/>
<path d="M584 212 L584 244" stroke="#20ff10" stroke-width="1.200" opacity=".8" fill="none"/>
<path d="M593 212 L593 244" stroke="#20ff10" stroke-width="1.200" opacity=".8" fill="none"/>
<g filter="url(#bx)">
<rect x="242" y="470" width="1.800" height="209" fill="#c8ff00"/>
<rect x="241.500" y="548" width="3" height="131" fill="#ffe000"/>
<rect x="242" y="572" width="2.500" height="70" fill="#ff9a00"/>
<rect x="237" y="572" width="3" height="28" fill="#ffd800"/>
<rect x="225.5" y="540" width="2" height="18" fill="#ffe000" opacity=".85"/>
<rect x="227.5" y="548" width="2" height="14" fill="#d8ff00" opacity=".85"/>
<rect x="232" y="560" width="2" height="16" fill="#ffe800" opacity=".85"/>
<rect x="234" y="568" width="2" height="14" fill="#e0ff00" opacity=".85"/>
<rect x="236.5" y="578" width="2" height="20" fill="#fff000" opacity=".85"/>
<rect x="247" y="602" width="2" height="12" fill="#f0ff00" opacity=".85"/>
<rect x="258" y="622" width="2" height="12" fill="#fff000" opacity=".85"/>
<rect x="264.5" y="620" width="2" height="18" fill="#ffc800" opacity=".85"/>
<rect x="267.5" y="622" width="2" height="14" fill="#ffe000" opacity=".85"/>
<rect x="270.5" y="620" width="2" height="18" fill="#ffb000" opacity=".85"/>
<rect x="273" y="612" width="2" height="12" fill="#fff000" opacity=".85"/>
<rect x="276" y="608" width="2" height="10" fill="#e8ff00" opacity=".85"/>
<rect x="285" y="590" width="2" height="14" fill="#d0ff00" opacity=".85"/>
<rect x="288.5" y="578" width="2" height="12" fill="#e8ff00" opacity=".85"/>
<rect x="291" y="570" width="2" height="14" fill="#ffe800" opacity=".85"/>
<rect x="295" y="560" width="2" height="16" fill="#fff000" opacity=".85"/>
<rect x="298" y="548" width="2" height="26" fill="#ffe000" opacity=".85"/>
<rect x="299.5" y="540" width="2" height="24" fill="#fff200" opacity=".85"/>
<rect x="234.5" y="610" width="2" height="40" fill="#e8ff00" opacity=".85"/>
<rect x="238" y="640" width="2" height="30" fill="#f0ff00" opacity=".85"/>
<rect x="246" y="628" width="2" height="22" fill="#e0ff00" opacity=".85"/>
<rect x="250" y="640" width="2" height="26" fill="#fff000" opacity=".85"/>
<rect x="253.5" y="650" width="2" height="20" fill="#ffe000" opacity=".85"/>
<rect x="257" y="655" width="2" height="22" fill="#fff000" opacity=".85"/>
<rect x="260.5" y="650" width="2" height="24" fill="#ffc000" opacity=".85"/>
<rect x="264" y="652" width="2" height="20" fill="#ffe800" opacity=".85"/>
<rect x="267" y="655" width="2" height="16" fill="#f0ff00" opacity=".85"/>
<rect x="277" y="648" width="2" height="14" fill="#e0ff00" opacity=".85"/>
<rect x="283" y="640" width="2" height="14" fill="#e8ff00" opacity=".85"/>
<rect x="287" y="632" width="2" height="12" fill="#d8ff00" opacity=".85"/>
<rect x="229" y="655" width="2" height="22" fill="#e8ff00" opacity=".85"/>
<rect x="232" y="650" width="2" height="26" fill="#d0ff00" opacity=".85"/>
<rect x="240" y="655" width="2" height="24" fill="#ffe800" opacity=".85"/>
</g>
<g filter="url(#b1)">
<rect x="264" y="621" width="3" height="16" fill="#ffd000" opacity="0.9"/>
<rect x="268" y="620" width="3" height="18" fill="#ffb000" opacity="0.9"/>
<rect x="271" y="622" width="2" height="12" fill="#ffe000" opacity="0.8"/>
<rect x="259" y="624" width="2" height="10" fill="#f0ff00" opacity="0.8"/>
<rect x="252" y="648" width="3" height="16" fill="#f8f000" opacity="0.85"/>
<rect x="257" y="652" width="3" height="16" fill="#ffd800" opacity="0.9"/>
<rect x="261" y="650" width="3" height="18" fill="#ffb800" opacity="0.9"/>
<rect x="265" y="652" width="2" height="14" fill="#ffe000" opacity="0.8"/>
<rect x="246" y="640" width="2" height="14" fill="#e8ff00" opacity="0.7"/>
<rect x="272" y="648" width="3" height="10" fill="#d8ff00" opacity="0.6"/>
<rect x="279" y="644" width="3" height="8" fill="#c8ff00" opacity="0.5"/>
<rect x="294" y="588" width="3" height="20" fill="#ffe800" opacity="0.9"/>
<rect x="297" y="586" width="3" height="22" fill="#fff000" opacity="0.9"/>
<rect x="290" y="596" width="2" height="12" fill="#e8ff00" opacity="0.7"/>
<rect x="300.5" y="575" width="2" height="11" fill="#ff5000" opacity="0.9"/>
<rect x="233" y="562" width="3" height="14" fill="#f8f000" opacity="0.8"/>
<rect x="237" y="576" width="3" height="22" fill="#ffe000" opacity="0.85"/>
<rect x="226" y="541" width="2" height="16" fill="#ffe800" opacity="0.8"/>
<rect x="229" y="552" width="2" height="10" fill="#e0ff00" opacity="0.7"/>
</g>
<rect x="222" y="652" width="11" height="27" fill="#00ff78" opacity=".7" filter="url(#b1)"/>
<rect x="222" y="520" width="7" height="130" fill="#00ff90" opacity=".6" filter="url(#b1)"/>
<g filter="url(#bx)">
<rect x="303" y="600" width="20" height="80" fill="#30ff00"/>
<rect x="304" y="600" width="1.500" height="80" fill="#ffe800" opacity=".85"/>
<rect x="306.5" y="600" width="1.500" height="80" fill="#c0ff00" opacity=".85"/>
<rect x="309" y="600" width="1.500" height="80" fill="#fff000" opacity=".85"/>
<rect x="311.5" y="600" width="1.500" height="80" fill="#e0ff00" opacity=".85"/>
<rect x="315" y="600" width="1.500" height="80" fill="#a0ff00" opacity=".85"/>
<rect x="318" y="600" width="1.500" height="80" fill="#ffe800" opacity=".85"/>
<rect x="320.5" y="600" width="1.500" height="80" fill="#d0ff00" opacity=".85"/>
<path d="M324 612 L316 645 L307 680 L300 680 L312 640 L321 612 Z" fill="#ffe400" opacity=".9"/>
<path d="M303 650 L311 650 L308 680 L300 680 Z" fill="#ffb800" opacity=".8"/>
<rect x="324" y="600" width="14" height="80" fill="#00ff8a" opacity=".9"/>
<rect x="338" y="600" width="48" height="80" fill="#10ff20" opacity=".6"/>
<rect x="340.5" y="600" width="1.200" height="80" fill="#d0ff00" opacity=".9"/>
<rect x="348" y="600" width="1.200" height="80" fill="#60ff00" opacity=".9"/>
<rect x="353" y="600" width="1.200" height="80" fill="#a0ff00" opacity=".9"/>
<rect x="357.5" y="600" width="1.200" height="80" fill="#f0ff00" opacity=".9"/>
<rect x="360" y="600" width="1.200" height="80" fill="#90ff00" opacity=".9"/>
<rect x="366" y="600" width="1.200" height="80" fill="#50ff00" opacity=".9"/>
<rect x="372" y="600" width="1.200" height="80" fill="#80ff00" opacity=".9"/>
<rect x="376" y="600" width="9.500" height="80" fill="#00ff80" opacity=".85"/>
</g>
<rect x="385.500" y="600" width="56" height="80" fill="#ffc400"/>
<g filter="url(#b1)">
<rect x="385.5" y="600" width="3" height="80" fill="#fff000" opacity="0.9"/>
<rect x="391" y="600" width="2" height="80" fill="#ffe000" opacity="0.7"/>
<rect x="396" y="600" width="3" height="80" fill="#ffd800" opacity="0.7"/>
<rect x="401.5" y="600" width="3" height="80" fill="#fff000" opacity="0.8"/>
<rect x="405" y="600" width="2" height="80" fill="#ff9800" opacity="0.7"/>
<rect x="408" y="600" width="2.5" height="80" fill="#ffe800" opacity="0.8"/>
<rect x="411" y="600" width="2" height="80" fill="#ff9000" opacity="0.6"/>
<rect x="415" y="600" width="2" height="80" fill="#ffc800" opacity="0.7"/>
<rect x="419" y="600" width="2.5" height="80" fill="#ffe000" opacity="0.7"/>
<rect x="423" y="600" width="2" height="80" fill="#ff9c00" opacity="0.7"/>
<rect x="426.5" y="600" width="2" height="80" fill="#ffd000" opacity="0.7"/>
<rect x="430" y="600" width="2.5" height="80" fill="#fff000" opacity="0.8"/>
<rect x="433.5" y="600" width="2" height="80" fill="#ffa000" opacity="0.7"/>
<rect x="436" y="600" width="2.5" height="80" fill="#ffe400" opacity="0.8"/>
<rect x="439.5" y="600" width="2" height="80" fill="#ffb000" opacity="0.7"/>
<path d="M425 610 L442 610 L442 621 L426 621 Z" fill="#ff6800" opacity=".9"/>
<path d="M387.500 612 L391.500 612 L402.500 680 L397 680 Z" fill="#ff3600"/>
<path d="M397 660 L400.500 660 L402.500 680 L398.500 680 Z" fill="#ff2400"/>
<path d="M411 610 L418 610 L424 628 L432 646 L427 650 L419 634 Z" fill="#ff5400"/>
<path d="M427 646 L432 644 L436 660 L431 664 Z" fill="#ff8a00" opacity=".7"/>
<path d="M419 658 L426 656 L428 680 L420 680 Z" fill="#ff8400" opacity=".85"/>
<path d="M403 640 L408 640 L413 680 L406 680 Z" fill="#ff9400" opacity=".6"/>
</g>
<g filter="url(#bx)">
<rect x="441.500" y="600" width="37" height="80" fill="#28ff08"/>
<rect x="443" y="600" width="1.300" height="80" fill="#c0ff00" opacity=".75"/>
<rect x="446" y="600" width="1.300" height="40" fill="#80ff00" opacity=".75"/>
<rect x="449.5" y="612" width="1.300" height="30" fill="#e8ff00" opacity=".75"/>
<rect x="453" y="600" width="1.300" height="80" fill="#50ff00" opacity=".75"/>
<rect x="457" y="640" width="1.300" height="38" fill="#c8ff00" opacity=".75"/>
<rect x="461" y="600" width="1.300" height="50" fill="#90ff00" opacity=".75"/>
<rect x="464" y="636" width="1.300" height="20" fill="#e0ff00" opacity=".75"/>
<rect x="468" y="600" width="1.300" height="80" fill="#60ff00" opacity=".75"/>
<rect x="471.5" y="625" width="1.300" height="20" fill="#d0ff00" opacity=".75"/>
<rect x="475" y="600" width="1.300" height="50" fill="#70ff00" opacity=".75"/>
<rect x="455" y="628" width="8" height="26" fill="#00ff70" opacity=".55"/>
<rect x="470" y="615" width="8" height="30" fill="#00ff60" opacity=".5"/>
<path d="M479 648 L479 680 L468 680 Z" fill="#ffc000"/>
</g>
</g>
<rect x="704" y="198" width="16" height="480" fill="url(#cbar)"/>
<g stroke="#000" stroke-width="1" fill="none" shape-rendering="crispEdges">
<path d="M203.500 197.500 H688.500 V685.500 H203.500 Z"/>
<path d="M720.500 198 V678"/>
<path d="M721 215.500 H726"/>
<path d="M198 209.500 H203"/>
<path d="M198 236.500 H203"/>
<path d="M198 270.500 H203"/>
<path d="M198 319.500 H203"/>
<path d="M198 415.500 H203"/>
<path d="M198 429.500 H203"/>
<path d="M198 445.500 H203"/>
<path d="M198 463.500 H203"/>
<path d="M198 485.500 H203"/>
<path d="M198 512.500 H203"/>
<path d="M198 546.500 H203"/>
<path d="M198 595.500 H203"/>
<path d="M192 402.500 H203"/>
<path d="M192 678.500 H203"/>
<path d="M204.500 686 V691"/>
<path d="M222.500 686 V697"/>
<path d="M241.500 686 V691"/>
<path d="M259.500 686 V691"/>
<path d="M278.500 686 V691"/>
<path d="M297.500 686 V691"/>
<path d="M315.500 686 V691"/>
<path d="M334.500 686 V691"/>
<path d="M353.500 686 V691"/>
<path d="M371.500 686 V691"/>
<path d="M390.500 686 V691"/>
<path d="M409.500 686 V691"/>
<path d="M427.500 686 V691"/>
<path d="M446.500 686 V697"/>
<path d="M465.500 686 V691"/>
<path d="M483.500 686 V691"/>
<path d="M502.500 686 V691"/>
<path d="M521.500 686 V691"/>
<path d="M539.500 686 V691"/>
<path d="M558.500 686 V691"/>
<path d="M577.500 686 V691"/>
<path d="M595.500 686 V691"/>
<path d="M614.500 686 V691"/>
<path d="M633.500 686 V691"/>
<path d="M651.500 686 V691"/>
<path d="M670.500 686 V697"/>
</g>
<g font-family="Liberation Sans, sans-serif" font-weight="normal" fill="#111" style="white-space:pre">
<text y="187" font-size="16.700"><tspan x="307.700" textLength="126.500" lengthAdjust="spacingAndGlyphs">RBSP-A/EMFISIS</tspan>  <tspan x="443.600" textLength="33" lengthAdjust="spacingAndGlyphs">HFR</tspan> <tspan x="481.700" textLength="59.800" lengthAdjust="spacingAndGlyphs">Spectra</tspan> <tspan x="545.800" textLength="37.300" lengthAdjust="spacingAndGlyphs">Data</tspan></text>
<text x="158" y="412" font-size="16.700" letter-spacing="0.300">10</text><text x="177.500" y="403.700" font-size="16.700">5</text>
<text x="158" y="688" font-size="16.700" letter-spacing="0.300">10</text><text x="177.500" y="679.700" font-size="16.700">4</text>
<text x="763" y="253" font-size="16.700" letter-spacing="0.300">10</text>
<text x="0" y="0" font-size="16.700" transform="translate(145.300,451.500) rotate(-90)">Hz</text>
<text x="200.400" y="716.600" font-size="16.700" letter-spacing="0.700">00:00</text>
<text x="200.400" y="732.700" font-size="16.700" letter-spacing="0.580">2012-12-02</text>
<text x="424.400" y="716.600" font-size="16.700" letter-spacing="0.700">12:00</text>
</g>
</svg>
<!-- ================= WINDOW 2 : Add Plot dialog ================= -->
<div class="a" style="left:1006px;top:244px;width:4px;height:4px;background:#0b1d3a;"></div>
<div class="a" style="left:302px;top:244px;width:708px;height:372px;background:#eee;border:1px solid #8d8d8d;border-radius:4px 4px 0 0;box-shadow:inset 0 0 0 2px #d8d8d8;"></div>
<div class="a" style="left:303px;top:245px;width:706px;height:25px;background:#d6d6d6;border-radius:3px 3px 0 0;"></div>
<svg class="a" style="left:315px;top:254px" width="10" height="8"><path d="M0.500 1 L8.500 1 L4.500 6.500 Z" fill="#b4b4b4"/></svg>
<div class="tbt" style="left:564px;top:251px;line-height:17px;letter-spacing:-0.170px;">Add Plot, URI was rejected...</div>
<svg class="a" style="left:984px;top:251px" width="14" height="14"><path d="M3.500 3.500 L10.500 10.500 M10.500 3.500 L3.500 10.500" stroke="#b6b6b6" stroke-width="2.200" fill="none"/></svg>
<div class="t" style="left:317px;top:270px;letter-spacing:-0.040px;">The URI was rejected.  Verify that it is correct using the inspect button (right).</div>
<div class="t" style="left:317px;top:291px;">Plot the Data Set URI:</div>
<div class="tf" style="left:317px;top:312px;width:605px;height:26px;"><div class="t" style="left:-7.500px;top:5px;">moments<span style="letter-spacing:-0.46px">/</span>rel<span style="letter-spacing:-0.46px">04/2012/</span>rbspa<span style="letter-spacing:-0.46px">_</span>rel<span style="letter-spacing:-0.46px">04_</span>ect<span style="letter-spacing:-0.46px">-</span>hope<span style="letter-spacing:-0.46px">-</span>mom<span style="letter-spacing:-0.46px">-</span>l<span style="letter-spacing:-0.46px">3_20121202_</span>v<span style="letter-spacing:-0.46px">7.1.0.</span>cdf<span style="letter-spacing:-0.46px">?</span>Tperp<span style="letter-spacing:-0.46px">_</span>Tpar<span style="letter-spacing:-0.46px">_</span>e<span style="letter-spacing:-0.46px">_30</span></div></div>
<div class="btn" style="left:923px;top:312px;width:20px;height:27px;"><svg class="a" style="left:4px;top:9px" width="11" height="7"><path d="M0 0 H10 L5 6 Z" fill="#222"/></svg></div>
<div class="btn" style="left:949px;top:312px;width:26px;height:27px;"><svg class="a" style="left:4px;top:3px" width="18" height="19"><defs><linearGradient id="bk" x1="0" y1="0" x2="0" y2="1"><stop offset="0" stop-color="#a09ccf"/><stop offset="0.400" stop-color="#8480c4"/><stop offset="1" stop-color="#6b65b6"/></linearGradient></defs><rect x="0" y="0.500" width="16.500" height="17" fill="#fff"/><g transform="translate(-0.100,-0.100) scale(1.070,1.050)"><path d="M1.500 3.500 Q1.500 1.500 3.500 1.200 H14.200 V14.800 L12.500 16.500 H2.500 Q1.500 16.500 1.500 15.500 Z" fill="#5d57a8"/><path d="M4 2.200 H13.200 V14.200 H12.400 V2.900 H4 Z" fill="#fff"/><rect x="4" y="3.300" width="8.300" height="12.600" fill="url(#bk)"/><path d="M8 6.300 L8.900 8.800 L11.500 8.800 L9.400 10.400 L10.200 13 L8 11.400 L5.800 13 L6.600 10.400 L4.500 8.800 L7.100 8.800 Z" fill="#fff"/></g></svg></div>
<div class="btn" style="left:981px;top:312px;width:26px;height:27px;border-color:#b8cfe5;box-shadow:inset 0 0 0 1px #7a8a99;"><svg class="a" style="left:4px;top:4px" width="18" height="18"><path d="M1 4 Q1 3.500 1.500 3.500 H6.500 L8 5 H14.500 V15 H1 Z" fill="#f3cf4a" stroke="#c49a0c"/><path d="M3 8 H15.500 L14 15 H1.200 Z" fill="#fff0a0" stroke="#c9a010"/><path d="M4 9.500 H13.500 L12.800 13.500 H3 Z" fill="#ffe678" opacity=".7"/><circle cx="11.500" cy="5.200" r="3.700" fill="#a9d1f7" stroke="#9da5b8" stroke-width="1.100"/><circle cx="11" cy="4.500" r="1.800" fill="#d6eafc"/><path d="M8.800 8.300 L5.600 11.800" stroke="#e8742a" stroke-width="2"/><path d="M8.800 8.300 L5.600 11.800" stroke="#ffd23c" stroke-width="2" stroke-dasharray="0.800 1"/></svg></div>
<div class="cb" style="left:321px;top:345px;"></div>
<div class="t" style="left:338px;top:344px;letter-spacing:-0.150px;">Plot Against (X):</div>
<div class="cb" style="left:321px;top:386px;"></div>
<div class="t" style="left:338px;top:385px;letter-spacing:0.005px;">Show "Additional Operations" fields, where filters can be applied immediately after loading.</div>
<!-- ================= WINDOW 3 : Editing URI dialog ================= -->
<div class="a" style="left:1330px;top:406px;width:4px;height:4px;background:#0b1d3a;"></div>
<div class="a" style="left:478px;top:406px;width:856px;height:508px;background:#eee;border:1px solid #7c7c7c;border-radius:4px 4px 0 0;box-shadow:inset 0 0 0 2px #e2e2e2;"></div>
<div class="a" style="left:479px;top:407px;width:854px;height:25px;background:linear-gradient(#ececec,#d4d4d4);border-radius:3px 3px 0 0;border-bottom:1px solid #c4c4c4;"></div>
<svg class="a" style="left:491px;top:416px" width="10" height="8"><path d="M0.500 1 L8.500 1 L4.500 6.500 Z" fill="#8e8e8e"/></svg>
<div class="a" style="left:514px;top:414px;width:782px;height:17px;-webkit-mask-image:linear-gradient(90deg,#000 0,#000 748px,rgba(0,0,0,0) 781px);mask-image:linear-gradient(90deg,#000 0,#000 748px,rgba(0,0,0,0) 781px);line-height:17px;letter-spacing:0.160px;white-space:pre;overflow:hidden;font:bold 13px 'DejaVu Sans Condensed','Liberation Sans',sans-serif;color:#686868;">Editing URI ftp://cdaweb.gsfc.nasa.gov/pub/data/rbsp/rbspa/l3/ect/hope/moments/rel04/2012/rbspa_rel04_ect-hope-mom-l3</div>
<svg class="a" style="left:1308px;top:414px" width="14" height="14"><path d="M3.500 3.500 L10.500 10.500 M10.500 3.500 L3.500 10.500" stroke="#9a9a9a" stroke-width="2.200" fill="none"/></svg>
<!-- inner etched frame -->
<div class="a" style="left:482px;top:433px;width:849px;height:443px;border:1px solid #fff;"></div>
<div class="a" style="left:481px;top:432px;width:849px;height:443px;border:1px solid #a4a4a4;"></div>

<!-- left-top split component -->
<div class="a" style="left:495px;top:446px;width:822px;height:231px;border:2px solid #6f8092;border-right:1px solid #fff;border-bottom:2px solid #fff;"></div>
<div class="a" style="left:816px;top:448px;width:9px;height:227px;background:#f3f3f3;border-left:1px solid #fff;"></div>
<div class="a" style="left:497px;top:468px;width:319px;height:207px;background:#c8ddf2;border:1px solid #6382bf;"></div>
<svg class="a" style="left:497px;top:449px" width="280" height="22">
 <g font-family="DejaVu Sans, Liberation Sans, sans-serif" font-weight="bold" font-size="12.500" fill="#333">
  <path d="M0.500 22 V8.500 L6.500 1.500 H209.500 V20" fill="#c8ddf2" stroke="#6382bf"/>
  <rect x="1" y="19" width="208" height="3" fill="#c8ddf2"/>
  <g fill="#eee" stroke="#7a8a99">
   <path d="M209.500 8 L215.500 1.500 H239.500 V19.500"/>
   <path d="M239.500 8 L245.500 1.500 H267.500 V19.500"/>
  </g>
  <text x="12" y="15" letter-spacing="-0.150">Select CDF Variable (of 26)</text>
  <text x="219" y="15">X</text>
  <text x="249" y="15">Y</text>
 </g>
</svg>
<!-- list -->
<div class="a" style="left:499px;top:472px;width:313px;height:199px;background:#fff;border:1px solid #7a8a99;"></div>
<div class="a" style="left:519px;top:493px;width:111px;height:20px;background:#b8cfe5;border:1px solid #6382bf;"></div>
<svg class="a" style="left:500px;top:473px" width="20" height="198"><defs><g id="fi"><path d="M2.500 2 H9.500 L14 6.500 V17 H2.500 Z" fill="#fff" stroke="#2d5d91" stroke-width="1.300"/><path d="M9.500 2 L10.500 6 L14 6.800" fill="#e6eef6" stroke="#2d5d91" stroke-width="1"/></g></defs>
<use href="#fi" y="1"/><use href="#fi" y="21"/><use href="#fi" y="41"/><use href="#fi" y="61"/><use href="#fi" y="81"/><use href="#fi" y="101"/><use href="#fi" y="121"/><use href="#fi" y="141"/><use href="#fi" y="161"/><use href="#fi" y="181"/></svg>
<div class="t nf" style="left:520px;top:476px;letter-spacing:-0.070px;">Tpar_p_30</div>
<div class="t nf" style="left:520px;top:496px;letter-spacing:-0.070px;">Tperp_Tpar_e_30</div>
<div class="t nf" style="left:520px;top:516px;letter-spacing:-0.070px;">Tperp_Tpar_he_30</div>
<div class="t nf" style="left:520px;top:536px;letter-spacing:-0.070px;">Tperp_Tpar_o_30</div>
<div class="t nf" style="left:520px;top:556px;letter-spacing:-0.070px;">Tperp_Tpar_p_30</div>
<div class="t nf" style="left:520px;top:576px;letter-spacing:-0.070px;">Tperp_e_200</div>
<div class="t nf" style="left:520px;top:596px;letter-spacing:-0.070px;">Tperp_he_30</div>
<div class="t nf" style="left:520px;top:616px;letter-spacing:-0.070px;">Tperp_o_30</div>
<div class="t nf" style="left:520px;top:636px;letter-spacing:-0.070px;">Tperp_p_30</div>
<div class="a" style="left:520px;top:656px;width:200px;height:14px;overflow:hidden;"><div class="t nf" style="left:0;top:0;letter-spacing:-0.070px;">he_o_ratio</div></div>
<!-- scrollbar -->
<div class="a" style="left:796px;top:473px;width:16px;height:197px;background:#eee;border-left:1px solid #7a8a99;border-right:1px solid #7a8a99;"></div>
<div class="a" style="left:796px;top:473px;width:16px;height:16px;background:linear-gradient(90deg,#fff,#e6eef6 60%,#dbe6f1);border:1px solid #7a8a99;border-top:0;"><svg class="a" style="left:2px;top:5px" width="10" height="6"><path d="M0 5 H9 L4.500 0.500 Z" fill="#222"/></svg></div>
<div class="a" style="left:796px;top:654px;width:16px;height:16px;background:linear-gradient(90deg,#fff,#e6eef6 60%,#dbe6f1);border:1px solid #7a8a99;border-bottom:0;"><svg class="a" style="left:2px;top:5px" width="10" height="6"><path d="M0 0.500 H9 L4.500 5 Z" fill="#222"/></svg></div>
<div class="a" style="left:796px;top:586px;width:16px;height:56px;background:linear-gradient(90deg,#c8ddf2 0%,#fff 30%,#dbe6f2 60%,#b8cfe5 100%);border:1px solid #6382bf;border-right-color:#7a8a99;"><div class="a" style="left:2px;top:25px;width:9px;height:6px;background:repeating-linear-gradient(#6382bf 0,#6382bf 1px,#fff 1px,#fff 2px);"></div></div>
<!-- vertical divider dots -->
<svg class="a" style="left:820px;top:451px" width="4" height="222"><defs><pattern id="bmp" width="4" height="4" patternUnits="userSpaceOnUse"><rect x="0" y="0" width="1" height="1" fill="#6f8092"/><rect x="2" y="2" width="1" height="1" fill="#6f8092"/><rect x="1" y="1" width="1" height="1" fill="#fff"/><rect x="3" y="3" width="1" height="1" fill="#fff"/></pattern></defs><rect width="4" height="222" fill="url(#bmp)"/></svg>

<!-- right-top: Advanced -->
<div class="a" style="left:825px;top:448px;width:1px;height:227px;background:#6f8092;"></div>
<div class="a" style="left:828px;top:455px;width:485px;height:218px;border:1px solid #b8cfe5;"></div>
<div class="a" style="left:832px;top:448px;width:72px;height:14px;background:#eee;"></div>
<div class="t" style="left:834px;top:447px;">Advanced</div>
<div class="t" style="left:831px;top:465px;letter-spacing:0.200px;">Load subset of the data:</div>
<div class="tf" style="left:843px;top:486px;width:141px;height:24px;"></div>
<div class="btn" style="left:983px;top:486px;width:20px;height:24px;"><svg class="a" style="left:4px;top:8px" width="11" height="7"><path d="M0 0 H10 L5 6 Z" fill="#222"/></svg></div>
<div class="cb" style="left:835px;top:517px;"></div>
<div class="t" style="left:852px;top:516px;letter-spacing:0.185px;">Only load data where:</div>
<div class="a" style="left:843px;top:543px;width:299px;height:24px;border:1px solid #7a8a99;box-shadow:inset 0 0 0 1px #b8cfe5;"></div>
<div class="a" style="left:1141px;top:543px;width:20px;height:24px;border:1px solid #8a8a8a;border-left-color:#7a8a99;background:#eee;"><svg class="a" style="left:5px;top:9px" width="10" height="6"><path d="M0 0 H9 L4.500 4.500 Z" fill="#b8cfe5"/></svg></div>
<div class="t" style="left:846px;top:547px;color:#b8cfe5;">B_Eq</div>
<div class="a" style="left:1167px;top:543px;width:65px;height:24px;border:1px solid #7a8a99;box-shadow:inset 0 0 0 1px #b8cfe5;"></div>
<div class="a" style="left:1231px;top:543px;width:20px;height:24px;border:1px solid #8a8a8a;border-left-color:#7a8a99;background:#eee;"><svg class="a" style="left:5px;top:9px" width="10" height="6"><path d="M0 0 H9 L4.500 4.500 Z" fill="#b8cfe5"/></svg></div>
<div class="t" style="left:1170px;top:547px;color:#b8cfe5;">.eq</div>
<div class="a" style="left:1257px;top:546px;width:53px;height:19px;border:1px solid #b8cfe5;background:#fff;"></div>
<div class="t nf" style="left:1261px;top:548px;color:#b8cfe5;">0</div>
<div class="t" style="left:831px;top:585px;letter-spacing:0.140px;">Interpret Metadata:</div>
<div class="cb" style="left:847px;top:607px;"></div>
<div class="t" style="left:864px;top:606px;">no ISTP</div>
<div class="cb" style="left:924px;top:607px;"></div>
<div class="t" style="left:941px;top:606px;letter-spacing:0.200px;">no dependencies</div>
<div class="cb" style="left:847px;top:630px;"></div>
<div class="t" style="left:864px;top:629px;">show all (18 support not shown)</div>
<!-- horizontal divider dots -->
<div class="a" style="left:495px;top:677px;width:822px;height:8px;background:#f1f1f1;"></div>
<svg class="a" style="left:499px;top:680px" width="815" height="4"><rect width="816" height="4" fill="url(#bmp)"/></svg>
<!-- info panel -->
<div class="a" style="left:495px;top:685px;width:820px;height:175px;border:2px solid #6f8092;border-right:1px solid #7a8a99;border-bottom:1px solid #7a8a99;box-shadow:1px 1px 0 #fff,2px 2px 0 #f8f8f8;"></div>
<div class="t" style="left:497px;top:687px;letter-spacing:-0.210px;">Tperp_Tpar_e_30(Epoch_Ele=3892)</div>
<div class="t" style="left:497px;top:702px;letter-spacing:-0.100px;">HOPE e Tperp/Tpar</div>
<div class="t" style="left:497.500px;top:731px;font-size:10px;letter-spacing:-0.050px;">Tperp on Tpar for e as a function of time for apogee mode only from 30 eV energy up</div>
<div class="t" style="left:497.500px;top:773px;font-size:10px;letter-spacing:-0.130px;">CDF data type is CDF_FLOAT</div>
<!-- buttons -->
<div class="btn" style="left:1136px;top:884px;width:94px;height:25px;text-align:center;line-height:23px;letter-spacing:0.500px;text-indent:0.500px;">Cancel</div>
<div class="btn" style="left:1236px;top:882px;width:83px;height:29px;text-align:center;line-height:27px;border-color:#687a8d;box-shadow:inset 0 0 0 1px rgba(122,138,153,.25);letter-spacing:1px;text-indent:1px;">OK</div>
<!-- mouse cursor -->
<svg class="a" style="left:610px;top:500px" width="42" height="58"><defs><linearGradient id="cg" x1="0" y1="0" x2="1" y2="1"><stop offset="0.450" stop-color="#fff"/><stop offset="1" stop-color="#d8d8d8"/></linearGradient></defs><path d="M5.200 8.800 L31.200 24 L22.600 29 L34 48.300 L26.800 52.400 L15.200 33.400 L5.200 39.300 Z" fill="url(#cg)" stroke="#141414" stroke-width="3.400" stroke-linejoin="round"/></svg>
</body></html>
